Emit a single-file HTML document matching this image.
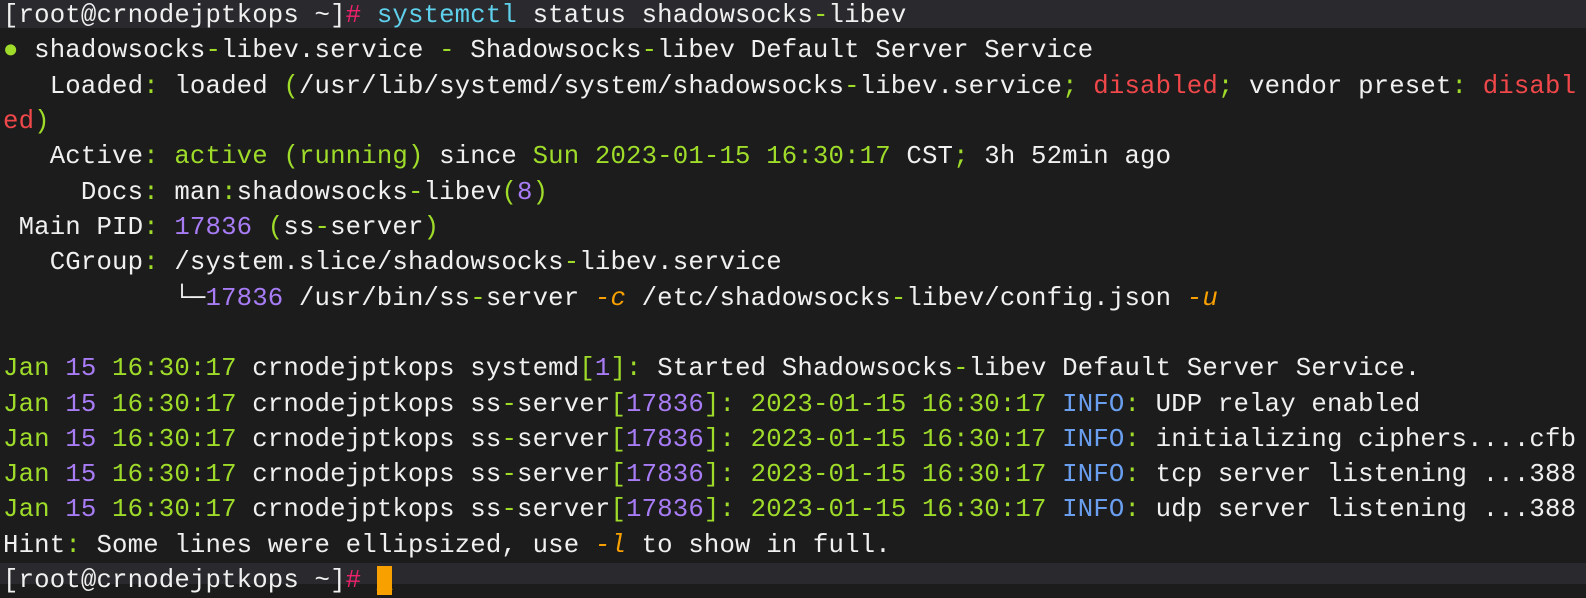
<!DOCTYPE html>
<html><head><meta charset="utf-8"><style>
html,body{margin:0;padding:0;background:#1c1c1c;width:1586px;height:584px;overflow:hidden}
.l{position:absolute;left:3px;margin:0;font-family:"Liberation Mono",monospace;font-size:25.7px;letter-spacing:0.16px;line-height:35px;color:#f0f0f0;white-space:pre}
.hl{position:absolute;left:0;width:1586px;height:28px;background:#2a2a2e}
.g{color:#9fdc2a}.p{color:#a77cf5}.r{color:#f0474a}.m{color:#f0216a}.c{color:#5fd0ec}.o{color:#f7a000;font-style:italic}.b{color:#6a9ff0}
.cur{background:#f7a000;color:#f7a000}
</style></head><body>
<div class="hl" style="top:0"></div>
<div class="hl" style="top:563px;height:21px"></div>
<div class="l" style="top:-2px">[root@crnodejptkops ~]<span class="m">#</span> <span class="c">systemctl</span> status shadowsocks<span class="g">-</span>libev</div>
<div class="l" style="top:33px"><span class="g">●</span> shadowsocks<span class="g">-</span>libev.service <span class="g">-</span> Shadowsocks<span class="g">-</span>libev Default Server Service</div>
<div class="l" style="top:69px">   Loaded<span class="g">:</span> loaded <span class="g">(</span>/usr/lib/systemd/system/shadowsocks<span class="g">-</span>libev.service<span class="g">;</span> <span class="r">disabled</span><span class="g">;</span> vendor preset<span class="g">:</span> <span class="r">disabl</span></div>
<div class="l" style="top:104px"><span class="r">ed</span><span class="g">)</span></div>
<div class="l" style="top:139px">   Active<span class="g">:</span> <span class="g">active (running)</span> since <span class="g">Sun 2023-01-15 16:30:17</span> CST<span class="g">;</span> 3h 52min ago</div>
<div class="l" style="top:175px">     Docs<span class="g">:</span> man<span class="g">:</span>shadowsocks<span class="g">-</span>libev<span class="g">(</span><span class="p">8</span><span class="g">)</span></div>
<div class="l" style="top:210px"> Main PID<span class="g">:</span> <span class="p">17836</span> <span class="g">(</span>ss<span class="g">-</span>server<span class="g">)</span></div>
<div class="l" style="top:245px">   CGroup<span class="g">:</span> /system.slice/shadowsocks<span class="g">-</span>libev.service</div>
<div class="l" style="top:281px">           └─<span class="p">17836</span> /usr/bin/ss<span class="g">-</span>server <span class="o">-c</span> /etc/shadowsocks<span class="g">-</span>libev/config.json <span class="o">-u</span></div>
<div class="l" style="top:351px"><span class="g">Jan</span> <span class="p">15</span> <span class="g">16:30:17</span> crnodejptkops systemd<span class="g">[</span><span class="p">1</span><span class="g">]:</span> Started Shadowsocks<span class="g">-</span>libev Default Server Service.</div>
<div class="l" style="top:387px"><span class="g">Jan</span> <span class="p">15</span> <span class="g">16:30:17</span> crnodejptkops ss<span class="g">-</span>server<span class="g">[</span><span class="p">17836</span><span class="g">]:</span> <span class="g">2023-01-15 16:30:17</span> <span class="b">INFO</span><span class="g">:</span> UDP relay enabled</div>
<div class="l" style="top:422px"><span class="g">Jan</span> <span class="p">15</span> <span class="g">16:30:17</span> crnodejptkops ss<span class="g">-</span>server<span class="g">[</span><span class="p">17836</span><span class="g">]:</span> <span class="g">2023-01-15 16:30:17</span> <span class="b">INFO</span><span class="g">:</span> initializing ciphers....cfb</div>
<div class="l" style="top:457px"><span class="g">Jan</span> <span class="p">15</span> <span class="g">16:30:17</span> crnodejptkops ss<span class="g">-</span>server<span class="g">[</span><span class="p">17836</span><span class="g">]:</span> <span class="g">2023-01-15 16:30:17</span> <span class="b">INFO</span><span class="g">:</span> tcp server listening ...388</div>
<div class="l" style="top:492px"><span class="g">Jan</span> <span class="p">15</span> <span class="g">16:30:17</span> crnodejptkops ss<span class="g">-</span>server<span class="g">[</span><span class="p">17836</span><span class="g">]:</span> <span class="g">2023-01-15 16:30:17</span> <span class="b">INFO</span><span class="g">:</span> udp server listening ...388</div>
<div class="l" style="top:528px">Hint<span class="g">:</span> Some lines were ellipsized, use <span class="o">-l</span> to show in full.</div>
<div class="l" style="top:563px">[root@crnodejptkops ~]<span class="m">#</span> <span class="cur">_</span></div>
</body></html>
